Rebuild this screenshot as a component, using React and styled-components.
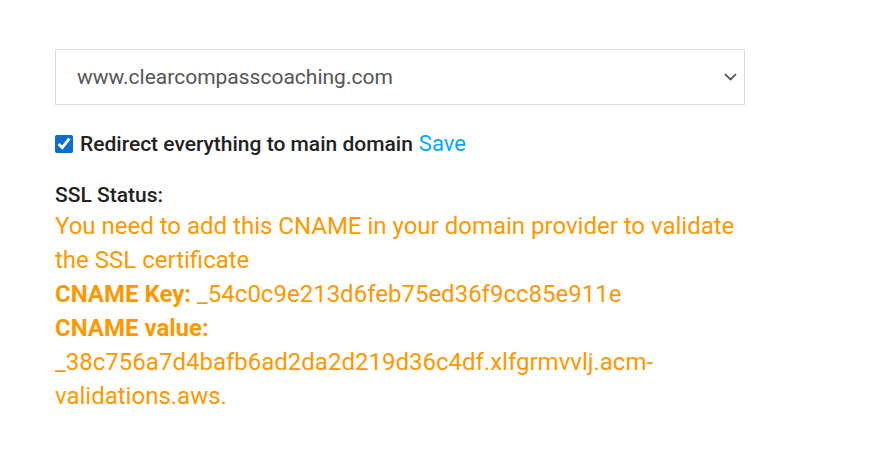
import styled, { createGlobalStyle } from "styled-components";

const GlobalStyle = createGlobalStyle`
  body {
    margin: 0;
    background: #fff;
    font-family: Roboto, "Liberation Sans", sans-serif;
  }
`;

const Page = () => {
  return (
    <Wrapper>
      <GlobalStyle />
      <SelectBox>
        <span>www.clearcompasscoaching.com</span>
        <svg width="13" height="8" viewBox="0 0 13 8">
          <path d="M1 1.2l5.5 5.3L12 1.2" fill="none" stroke="#555" strokeWidth="1.8" />
        </svg>
      </SelectBox>
      <RedirectRow>
        <Check type="checkbox" defaultChecked />
        <Label>Redirect everything to main domain</Label>
        <SaveLink href="#">Save</SaveLink>
      </RedirectRow>
      <Status>
        <Heading>SSL Status:</Heading>
        <Notice>
          You need to add this CNAME in your domain provider to validate the SSL certificate
          <br />
          <b>CNAME Key:</b> _54c0c9e213d6feb75ed36f9cc85e911e
          <br />
          <b>CNAME value:</b>
          <br />
          _38c756a7d4bafb6ad2da2d219d36c4df.xlfgrmvvlj.acm-validations.aws.
        </Notice>
      </Status>
    </Wrapper>
  );
};

export default Page;

const Wrapper = styled.div`
  padding: 49px 0 0 55px;
`;

const SelectBox = styled.div`
  width: 690px;
  height: 56px;
  box-sizing: border-box;
  border: 1px solid #dcdcdc;
  display: flex;
  align-items: center;
  justify-content: space-between;
  padding: 0 7px 0 21px;
  font-size: 21px;
  color: #555;
`;

const RedirectRow = styled.div`
  display: flex;
  align-items: center;
  margin-top: 26px;
`;

const Check = styled.input`
  width: 18px;
  height: 18px;
  margin: 0 7px 0 0;
  accent-color: #0a6ed1;
`;

const Label = styled.span`
  font-size: 21px;
  font-weight: 500;
  color: #222;
`;

const SaveLink = styled.a`
  margin-left: 6px;
  font-size: 22px;
  color: #03a9f4;
  text-decoration: none;
`;

const Status = styled.div`
  margin-top: 27px;
  width: 700px;
`;

const Heading = styled.div`
  font-size: 21px;
  font-weight: 500;
  color: #222;
`;

const Notice = styled.div`
  margin-top: 2px;
  font-size: 24px;
  line-height: 34px;
  color: #ff9800;

  b {
    font-weight: 700;
  }
`;
